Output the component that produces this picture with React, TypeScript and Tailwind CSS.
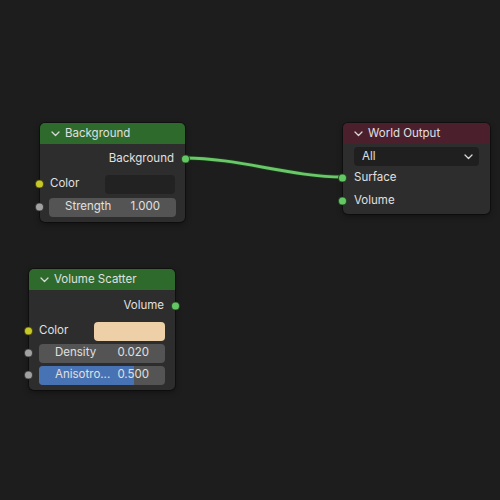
import type { ReactNode } from "react";

const FONT = { fontFamily: "Inter, 'Noto Sans', sans-serif" };

type SocketKind = "color" | "value" | "shader";

const socketColors: Record<SocketKind, string> = {
  color: "bg-[#c7c729]",
  value: "bg-[#a1a1a1]",
  shader: "bg-[#63c763]",
};

function Socket({ kind, side }: { kind: SocketKind; side: "left" | "right" }) {
  return (
    <span
      className={`absolute top-1/2 -translate-y-1/2 w-[9px] h-[9px] rounded-full border border-black/60 ${socketColors[kind]} ${
        side === "left" ? "left-[-5px]" : "right-[-5px]"
      }`}
    />
  );
}

function Chevron({ className = "" }: { className?: string }) {
  return (
    <svg width="9" height="6" viewBox="0 0 9 6" className={className}>
      <path d="M1 1 L4.5 4.5 L8 1" fill="none" stroke="#d8d8d8" strokeWidth="1.3" strokeLinecap="round" strokeLinejoin="round" />
    </svg>
  );
}

function Node({
  title,
  header,
  x,
  y,
  width,
  children,
}: {
  title: string;
  header: string;
  x: number;
  y: number;
  width: number;
  children: ReactNode;
}) {
  return (
    <div
      className="absolute rounded-[5px] bg-[#2d2d2d] shadow-[0_0_0_1px_rgba(0,0,0,0.35),0_2px_6px_rgba(0,0,0,0.4)]"
      style={{ left: x, top: y, width }}
    >
      <div className={`h-[21px] flex items-center gap-[5px] pl-[11px] rounded-t-[5px] ${header}`}>
        <Chevron />
        <span className="text-[11.5px] text-[#e0e0e0] leading-none">{title}</span>
      </div>
      {children}
    </div>
  );
}

function Slider({ label, value, fill }: { label: string; value: string; fill?: number }) {
  return (
    <div className="relative flex-1 h-[19px] rounded-[4px] bg-[#545454] overflow-hidden">
      {fill !== undefined && (
        <div className="absolute inset-y-0 left-0 bg-[#4772b3]" style={{ width: `${fill}%` }} />
      )}
      <div className="relative h-full flex items-center justify-between px-[16px] text-[11.5px] text-[#e0e0e0]">
        <span>{label}</span>
        <span>{value}</span>
      </div>
    </div>
  );
}

export default function App() {
  return (
    <div className="relative w-[500px] h-[500px] bg-[#1d1d1d] overflow-hidden" style={FONT}>
      <svg className="absolute inset-0" width="500" height="500">
        <path d="M186 158 C 236 158, 293 177, 343 177" fill="none" stroke="#1a3a1a" strokeWidth="4.5" />
        <path d="M186 158 C 236 158, 293 177, 343 177" fill="none" stroke="#6ac86a" strokeWidth="2.8" />
      </svg>

      <Node title="Background" header="bg-[#2e6a2c]" x={40} y={123} width={145}>
        <div className="pt-[4px] pb-[5px] flex flex-col">
          <div className="relative h-[22px] flex items-center justify-end pr-[11px] text-[11.5px] text-[#e0e0e0]">
            Background
            <Socket kind="shader" side="right" />
          </div>
          <div className="relative h-[20px] mt-[4px] flex items-center pl-[10px] pr-[10px] text-[11.5px] text-[#e0e0e0]">
            <span className="w-[55px]">Color</span>
            <div className="flex-1 h-[19px] rounded-[4px] bg-[#222222]" />
            <Socket kind="color" side="left" />
          </div>
          <div className="relative h-[20px] mt-[3px] flex items-center px-[9px]">
            <Slider label="Strength" value="1.000" />
            <Socket kind="value" side="left" />
          </div>
        </div>
      </Node>

      <Node title="World Output" header="bg-[#4b1f2c]" x={343} y={123} width={147}>
        <div className="pt-[3px] pb-[2px] flex flex-col">
          <div className="px-[11px]">
            <div className="h-[19px] rounded-[4px] bg-[#1f1f1f] flex items-center justify-between pl-[8px] pr-[6px] text-[11.5px] text-[#e0e0e0]">
              <span>All</span>
              <Chevron />
            </div>
          </div>
          <div className="relative h-[22px] mt-[1px] flex items-center pl-[11px] text-[11.5px] text-[#e0e0e0]">
            Surface
            <Socket kind="shader" side="left" />
          </div>
          <div className="relative h-[23px] flex items-center pl-[11px] text-[11.5px] text-[#e0e0e0]">
            Volume
            <Socket kind="shader" side="left" />
          </div>
        </div>
      </Node>

      <Node title="Volume Scatter" header="bg-[#2e6a2c]" x={29} y={269} width={146}>
        <div className="pt-[5px] pb-[5px] flex flex-col">
          <div className="relative h-[22px] flex items-center justify-end pr-[11px] text-[11.5px] text-[#e0e0e0]">
            Volume
            <Socket kind="shader" side="right" />
          </div>
          <div className="relative h-[20px] mt-[4px] flex items-center pl-[10px] pr-[10px] text-[11.5px] text-[#e0e0e0]">
            <span className="w-[55px]">Color</span>
            <div className="flex-1 h-[19px] rounded-[4px] bg-[#eed0a8]" />
            <Socket kind="color" side="left" />
          </div>
          <div className="relative h-[20px] mt-[2px] flex items-center px-[10px]">
            <Slider label="Density" value="0.020" />
            <Socket kind="value" side="left" />
          </div>
          <div className="relative h-[20px] mt-[2px] flex items-center px-[10px]">
            <Slider label="Anisotro..." value="0.500" fill={75} />
            <Socket kind="value" side="left" />
          </div>
        </div>
      </Node>
    </div>
  );
}
